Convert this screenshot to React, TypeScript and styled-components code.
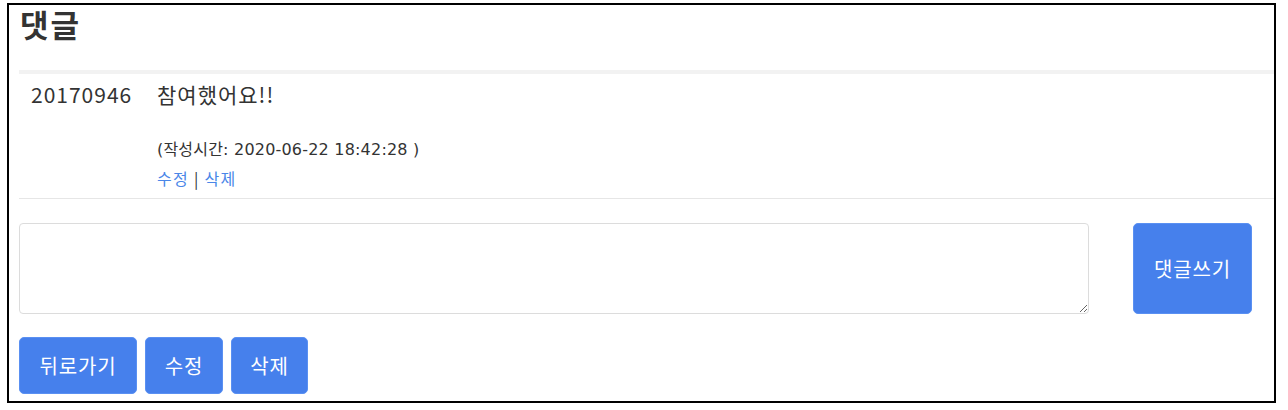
import React from "react";
import styled, { createGlobalStyle } from "styled-components";

const Global = createGlobalStyle`
  html, body { margin: 0; padding: 0; background: #fff; }
  body { font-family: "Noto Sans CJK KR", "Noto Sans", sans-serif; color: #333; }
  * { box-sizing: border-box; }
`;

const Frame = styled.div`
  margin: 3px 0 0 7px;
  width: 1269px;
  height: 400px;
  border: 2px solid #000;
  padding-left: 10px;
  display: flex;
  flex-direction: column;
`;

const Title = styled.h2`
  margin: 0;
  font-size: 31px;
  line-height: 37px;
  font-weight: 700;
  letter-spacing: 2px;
  color: #333;
  padding-left: 1px;
`;

const CommentTable = styled.div`
  margin-top: 28px;
  border-top: 4px solid #f2f2f2;
  border-bottom: 1px solid #e6e6e6;
`;

const CommentRow = styled.div`
  display: grid;
  grid-template-columns: 126px 1fr;
  padding: 8px 0 6px 12px;
`;

const Writer = styled.div`
  font-size: 21px;
  line-height: 24px;
  letter-spacing: 1px;
`;

const Body = styled.div`
  display: flex;
  flex-direction: column;
`;

const Message = styled.div`
  font-size: 21px;
  line-height: 24px;
  letter-spacing: 1px;
  margin-bottom: 30px;
`;

const Meta = styled.div`
  font-family: "DejaVu Sans", "Noto Sans CJK KR", sans-serif;
  font-size: 16px;
  line-height: 28px;
  letter-spacing: 0.2px;
`;

const Links = styled.div`
  font-size: 16px;
  line-height: 28px;
  letter-spacing: 1.3px;
  color: #333;
`;

const LinkText = styled.a`
  color: #4a86e8;
  text-decoration: none;
`;

const WriteRow = styled.div`
  display: flex;
  align-items: flex-start;
  margin-top: 24px;
`;

const TextBox = styled.textarea`
  width: 1070px;
  height: 91px;
  border: 1px solid #dcdcdc;
  border-radius: 4px;
  resize: vertical;
  margin: 0;
  font-family: inherit;
`;

const Button = styled.button<{ $w?: number; $h?: number }>`
  width: ${(p) => p.$w ?? 80}px;
  height: ${(p) => p.$h ?? 57}px;
  background: #4680ec;
  border: 1px solid #5a90f2;
  border-radius: 5px;
  color: #fff;
  font-family: "Noto Sans CJK KR", "Noto Sans", sans-serif;
  font-size: 20px;
  letter-spacing: 0.8px;
  padding: 0;
  cursor: pointer;
`;

const SubmitButton = styled(Button)`
  margin-left: 44px;
`;

const ButtonBar = styled.div`
  display: flex;
  gap: 8px;
  margin-top: 23px;
`;

export default function App() {
  return (
    <>
      <Global />
      <Frame>
        <Title>댓글</Title>
        <CommentTable>
          <CommentRow>
            <Writer>20170946</Writer>
            <Body>
              <Message>참여했어요!!</Message>
              <Meta>(작성시간: 2020-06-22 18:42:28 )</Meta>
              <Links>
                <LinkText href="#">수정</LinkText> | <LinkText href="#">삭제</LinkText>
              </Links>
            </Body>
          </CommentRow>
        </CommentTable>
        <WriteRow>
          <TextBox />
          <SubmitButton $w={119} $h={91}>댓글쓰기</SubmitButton>
        </WriteRow>
        <ButtonBar>
          <Button $w={118}>뒤로가기</Button>
          <Button $w={78}>수정</Button>
          <Button $w={77}>삭제</Button>
        </ButtonBar>
      </Frame>
    </>
  );
}
